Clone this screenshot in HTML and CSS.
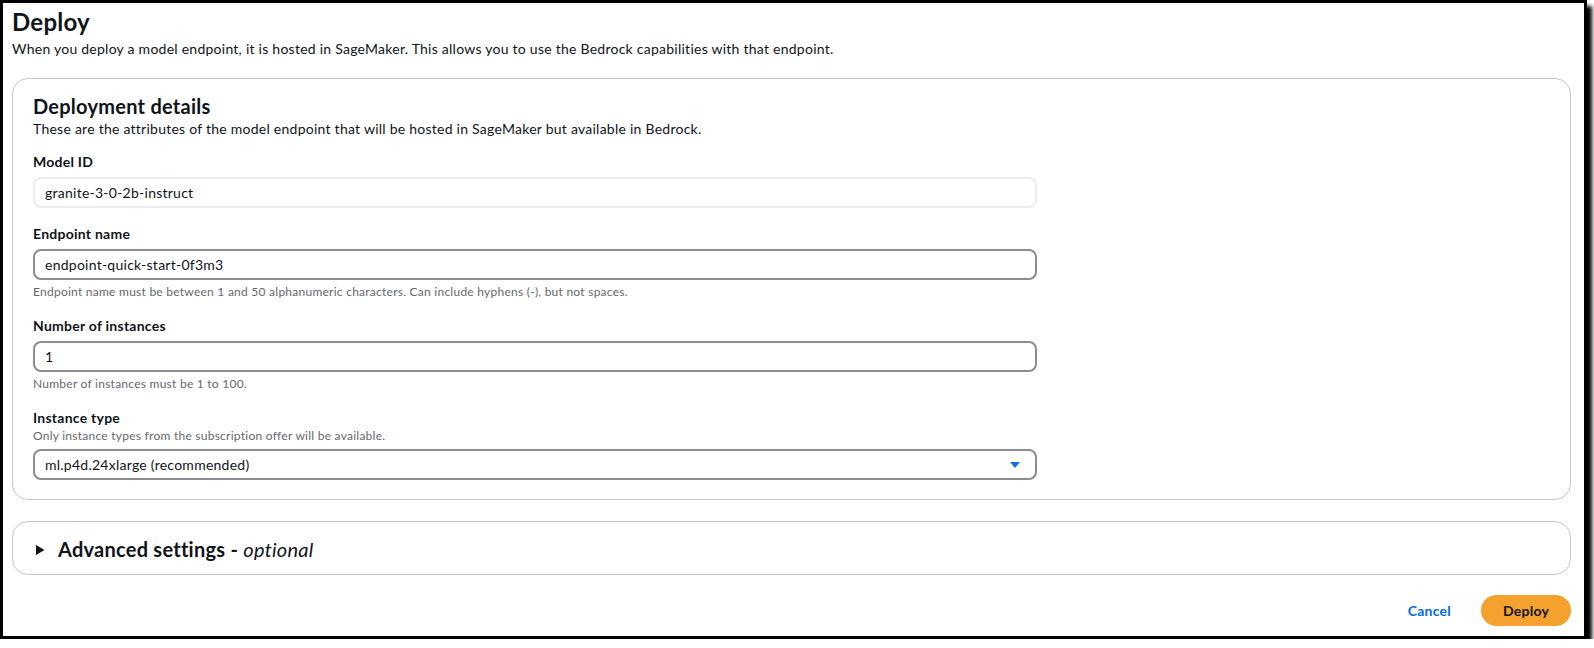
FILE: index.html
```html
<!DOCTYPE html>
<html>
<head>
  <title>Deploy</title>
  <link rel="stylesheet" href="styles.css">
</head>
<body>

  <div class="frame">
    <div class="page-head">
      <h1>Deploy</h1>
      <p>When you deploy a model endpoint, it is hosted in SageMaker. This allows you to use the Bedrock capabilities with that endpoint.</p>
    </div>

    <section class="panel">
      <h2>Deployment details</h2>
      <p class="panel-desc">These are the attributes of the model endpoint that will be hosted in SageMaker but available in Bedrock.</p>

      <div class="field first">
        <label>Model ID</label>
        <input type="text" class="readonly" value="granite-3-0-2b-instruct" readonly>
      </div>

      <div class="field">
        <label>Endpoint name</label>
        <input type="text" value="endpoint-quick-start-0f3m3">
        <div class="hint">Endpoint name must be between 1 and 50 alphanumeric characters. Can include hyphens (-), but not spaces.</div>
      </div>

      <div class="field">
        <label>Number of instances</label>
        <input type="text" value="1">
        <div class="hint">Number of instances must be 1 to 100.</div>
      </div>

      <div class="field">
        <label>Instance type</label>
        <div class="field-desc">Only instance types from the subscription offer will be available.</div>
        <div class="select">
          <span>ml.p4d.24xlarge (recommended)</span>
          <svg width="12" height="8" viewBox="0 0 12 8"><path d="M1 1h10L6 7z" fill="#0f6fe6"/></svg>
        </div>
      </div>
    </section>

    <section class="panel expander">
      <span class="caret">
        <svg width="16" height="16" viewBox="0 0 16 16"><path d="M4 3l8.5 5L4 13z" fill="#0f141a"/></svg>
      </span>
      <span class="expander-title">Advanced settings - <i>optional</i></span>
    </section>

    <div class="actions">
      <button class="btn-link">Cancel</button>
      <button class="btn-primary">Deploy</button>
    </div>
  </div>

</body>
</html>
```

FILE: styles.css
```css
body {
  margin: 0;
  background: #fff;
  font-family: 'Lato', 'Open Sans', sans-serif;
  letter-spacing: 0.25px;
  color: #0f141a;
}

.frame {
  width: 1559px;
  height: 629px;
  padding: 4px 13px 0 9px;
  border: 3px solid #000;
  box-shadow: 5px 6px 4px #000;
  background: #fff;
}

h1 {
  margin: 0;
  font-size: 24px;
  line-height: 30px;
  font-weight: 700;
}

.page-head p {
  margin: 2px 0 0;
  font-size: 14px;
  line-height: 20px;
}

.panel {
  margin-top: 19px;
  border: 1px solid #c6c6cd;
  border-radius: 16px;
  padding: 15px 20px 19px;
}

h2 {
  margin: 0;
  font-size: 20px;
  line-height: 24px;
  font-weight: 700;
}

.panel-desc {
  margin: 1px 0 0;
  font-size: 14px;
  line-height: 20px;
}

.field {
  margin-top: 16px;
}

.field.first {
  margin-top: 13px;
}

label {
  display: block;
  font-size: 14px;
  line-height: 20px;
  font-weight: 700;
}

.field-desc {
  font-size: 12px;
  line-height: 16px;
  color: #656871;
}

input[type="text"], .select {
  box-sizing: border-box;
  display: block;
  width: 1004px;
  height: 31px;
  margin-top: 5px;
  padding: 0 10px;
  border: 2px solid #8c8c94;
  border-radius: 8px;
  font-family: inherit;
  font-size: 14px;
  letter-spacing: 0.25px;
  color: #0f141a;
  background: #fff;
}

input.readonly {
  border: 2px solid #ebebf0;
}

.hint {
  margin-top: 4px;
  font-size: 12px;
  line-height: 16px;
  color: #656871;
}

.select {
  display: flex;
  align-items: center;
  justify-content: space-between;
  padding-right: 14px;
}

.expander {
  display: flex;
  align-items: center;
  margin-top: 21px;
  padding: 15px 19px 12px;
}

.caret {
  display: flex;
  width: 16px;
  height: 16px;
  margin-right: 10px;
}

.expander-title {
  font-size: 20px;
  line-height: 25px;
  font-weight: 700;
}

.expander-title i {
  font-weight: 400;
}

.actions {
  display: flex;
  justify-content: flex-end;
  align-items: center;
  margin-top: 20px;
}

button {
  font-family: inherit;
  font-size: 14px;
  font-weight: 700;
  letter-spacing: 0.25px;
  border: none;
  cursor: pointer;
}

.btn-link {
  background: none;
  color: #006ce0;
  padding: 0 20px;
  margin-right: 10px;
}

.btn-primary {
  width: 90px;
  height: 31px;
  border-radius: 16px;
  background: #f5a12d;
  color: #0f141a;
}
```
